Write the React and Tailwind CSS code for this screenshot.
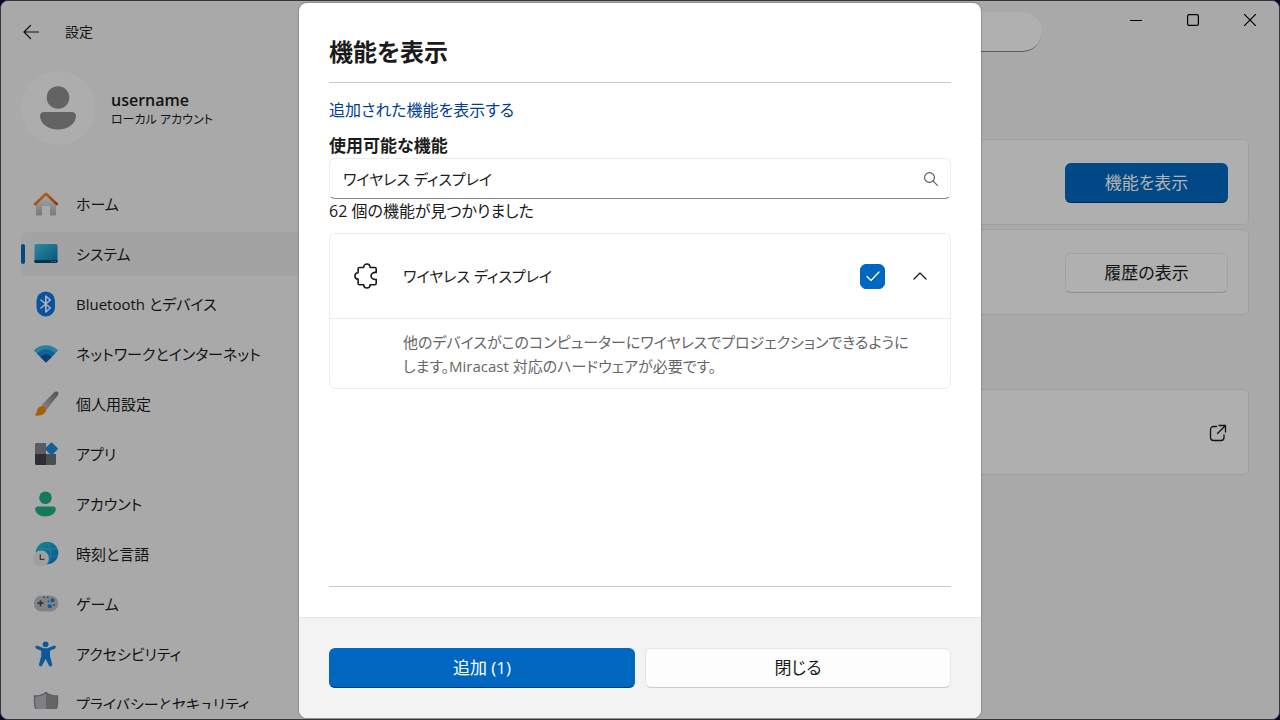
import React, { useState } from 'react';

const HomeIcon = () => (
  <svg viewBox="0 0 26 26" className="size-[26px]">
    <defs>
      <linearGradient id="home-wall" x1="0" y1="0" x2="0" y2="1">
        <stop offset="0" stopColor="#f2f2f2" />
        <stop offset="1" stopColor="#adadad" />
      </linearGradient>
      <linearGradient id="home-roof" x1="0" y1="0" x2="1" y2="1">
        <stop offset="0" stopColor="#ff9a2e" />
        <stop offset="1" stopColor="#d8501c" />
      </linearGradient>
    </defs>
    <path d="M3 11 13 3l10 8v12.200c0 .8-.5 1.300-1.300 1.300H17v-9.500H9v9.500H4.300c-.8 0-1.300-.5-1.300-1.300z" fill="url(#home-wall)" />
    <path d="M2 13.200 13 2.800l11 10.400" fill="none" stroke="url(#home-roof)" strokeWidth="2.600" strokeLinecap="round" strokeLinejoin="round" />
  </svg>
);

const SystemIcon = () => (
  <svg viewBox="0 0 26 26" className="size-[26px]">
    <defs>
      <linearGradient id="sys-screen" x1="0" y1="0" x2="1" y2="1">
        <stop offset="0" stopColor="#3fc8e0" />
        <stop offset="1" stopColor="#0a78b4" />
      </linearGradient>
    </defs>
    <rect x="1.500" y="3" width="23" height="19" rx="1.800" fill="url(#sys-screen)" />
    <path d="M1.500 19h23v1.400a1.600 1.600 0 0 1-1.600 1.600H3.100a1.600 1.600 0 0 1-1.600-1.600z" fill="#0c4668" />
    <path d="M18.500 20.500h1M21.500 20.500h1" stroke="#b5e4f5" />
  </svg>
);

const BluetoothIcon = () => (
  <svg viewBox="0 0 26 26" className="size-[26px]">
    <rect x="3.500" y=".5" width="18.500" height="25" rx="9.200" fill="#0a78e6" />
    <path d="M8 9 17.300 17 12.800 21V5l4.500 4L8 17" fill="none" stroke="#fff" strokeWidth="1.600" strokeLinejoin="round" strokeLinecap="round" />
  </svg>
);

const NetworkIcon = () => (
  <svg viewBox="0 0 26 26" className="size-[26px]">
    <path d="M.8 9.500C7.500 2.500 18.500 2.500 25.200 9.500L13 21.500z" fill="#35bce8" />
    <path d="M3.800 12.500c5-5.300 13.400-5.300 18.400 0L13 21.500z" fill="#1a8ad6" />
    <path d="M7.300 15.900c3.100-3.400 8.300-3.400 11.400 0L13 21.500z" fill="#1155b0" />
  </svg>
);

const BrushIcon = () => (
  <svg viewBox="0 0 26 26" className="size-[26px]">
    <defs>
      <linearGradient id="brush-handle" x1="0" y1="1" x2="1" y2="0">
        <stop offset="0" stopColor="#c0c0c4" />
        <stop offset="1" stopColor="#77777d" />
      </linearGradient>
    </defs>
    <path d="M8.500 14 20.500 2c1.900-1.800 3.800-1.700 4.500-.9.7.9.500 2.400-.7 3.900L13.500 18.800z" fill="url(#brush-handle)" />
    <path d="M8.300 15.200c2.300-1 5.300 1.100 4.700 4.100-.7 4.700-7 6.500-12 4.700 2.800-.7 2.300-2.700 3-4.800.7-2.300 2.300-3.400 4.300-4z" fill="#f28a10" />
  </svg>
);

const AppsIcon = () => (
  <svg viewBox="0 0 26 26" className="size-[26px]">
    <path d="M3.500 2H13v11H2V3.500C2 2.700 2.700 2 3.500 2z" fill="#84848a" />
    <path d="M2 13h11v11H3.500c-.8 0-1.500-.7-1.500-1.500z" fill="#3f4247" />
    <path d="M13 13h10v9.500c0 .8-.7 1.500-1.500 1.500H13z" fill="#6c6f74" />
    <rect x="13.700" y="3" width="9.600" height="9.600" rx="1" transform="rotate(45 18.500 7.800)" fill="#1b8ddb" />
  </svg>
);

const AccountIcon = () => (
  <svg viewBox="0 0 26 26" className="size-[26px]">
    <circle cx="12.500" cy="6.800" r="6.300" fill="#1fae84" />
    <path d="M4.700 15.500h15.600c1.400 0 2.500 1 2.500 2.300 0 4.600-4.500 7.700-10.300 7.700S2.200 22.400 2.200 17.800c0-1.300 1.100-2.300 2.500-2.300z" fill="#1fae84" />
  </svg>
);

const TimeIcon = () => (
  <svg viewBox="0 0 26 26" className="size-[26px]">
    <defs>
      <linearGradient id="globe" x1="0" y1="0" x2="1" y2="1">
        <stop offset="0" stopColor="#23c4c8" />
        <stop offset="1" stopColor="#0a78d4" />
      </linearGradient>
    </defs>
    <circle cx="14" cy="12" r="11.300" fill="url(#globe)" />
    <path d="M4 8h20M14 15h11M14 1c5 6 5 16 0 22" fill="none" stroke="#5cc8e6" strokeWidth=".5" />
    <circle cx="8" cy="17.500" r="8" fill="#e4e4e4" />
    <path d="M7.300 13.300v5h4.200" fill="none" stroke="#555" strokeWidth="1.300" />
  </svg>
);

const GameIcon = () => (
  <svg viewBox="0 0 26 26" className="size-[26px]">
    <rect x=".8" y="4.500" width="24.500" height="16" rx="8" fill="#b9bdc2" />
    <path d="M7.500 9.200v6M4.500 12.200h6" stroke="#4a4d52" strokeWidth="1.700" />
    <path d="M10.500 6.300h1.500M14 6.300h1.500" stroke="#4a4d52" strokeWidth="1.200" />
    <circle cx="19.500" cy="9.300" r="2" fill="#1b7fe0" />
    <circle cx="16.700" cy="15.300" r="2" fill="#1b7fe0" />
    <circle cx="21" cy="14" r="1" fill="#1b7fe0" />
    <circle cx="15.500" cy="10.500" r="1" fill="#1b7fe0" />
  </svg>
);

const AccessibilityIcon = () => (
  <svg viewBox="0 0 26 26" className="size-[26px]">
    <circle cx="12.600" cy="3.300" r="2.900" fill="#1280dc" />
    <path d="M4 6.200 9 8.200M21.200 6.200l-5 2" stroke="#1280dc" strokeWidth="3.200" strokeLinecap="round" />
    <path d="M8.200 7.200h8.800v8l2.200 8.100a1.700 1.700 0 0 1-3.200 1.100L12.600 18l-3.400 6.400A1.700 1.700 0 0 1 6 23.300l2.200-8.100z" fill="#1280dc" />
  </svg>
);

const ShieldIcon = () => (
  <svg viewBox="0 0 26 26" className="size-[26px]">
    <path d="M13 1.500C10 4 6 5 1.500 5v7c0 6.500 4 11 11.500 14z" fill="#b4b7bb" />
    <path d="M13 1.500C16 4 20 5 24.500 5v7c0 6.500-4 11-11.500 14z" fill="#8f9297" />
    <path d="M13 1.500C10 4 6 5 1.500 5v7c0 6.500 4 11 11.500 14 7.500-3 11.500-7.500 11.500-14V5C20 5 16 4 13 1.500z" fill="none" stroke="#85888d" strokeWidth="1.400" />
  </svg>
);

const PuzzleIcon = () => (
  <svg viewBox="0 0 26 26" className="size-[26px]" fill="none" stroke="#1b1b1b" strokeWidth="1.600" strokeLinejoin="round">
    <path d="M5.500 4.500h4.200c0-2 1.300-3.500 3.200-3.500s3.200 1.500 3.200 3.500h4.700c.8 0 1.400.6 1.400 1.400v3.600c-2.700-.4-5.200 1-5.200 3.400s2.500 3.900 5.200 3.500v3.900c0 .8-.6 1.400-1.400 1.400h-4.700c0 2-1.300 3.300-3.200 3.300s-3.200-1.300-3.200-3.300H5.500c-.8 0-1.400-.6-1.400-1.400v-4.200c-2 0-3.100-1.400-3.100-3.200s1.100-3.200 3.100-3.200V5.900c0-.8.6-1.400 1.400-1.400z" />
  </svg>
);

const navItems = [
  { label: 'ホーム', Icon: HomeIcon },
  { label: 'システム', Icon: SystemIcon, active: true },
  { label: 'Bluetooth とデバイス', Icon: BluetoothIcon },
  { label: 'ネットワークとインターネット', Icon: NetworkIcon },
  { label: '個人用設定', Icon: BrushIcon },
  { label: 'アプリ', Icon: AppsIcon },
  { label: 'アカウント', Icon: AccountIcon },
  { label: '時刻と言語', Icon: TimeIcon },
  { label: 'ゲーム', Icon: GameIcon },
  { label: 'アクセシビリティ', Icon: AccessibilityIcon },
  { label: 'プライバシーとセキュリティ', Icon: ShieldIcon },
];

const Sidebar = () => (
  <aside className="flex w-80 shrink-0 flex-col pl-5">
    <div className="flex h-[62px] shrink-0 items-center gap-6">
      <button type="button" aria-label="戻る">
        <svg viewBox="0 0 20 20" className="size-5" fill="none" stroke="#1b1b1b" strokeWidth="1.200" strokeLinecap="round" strokeLinejoin="round">
          <path d="M17.500 10H3M9.500 3.500 3 10l6.500 6.500" />
        </svg>
      </button>
      <span className="text-sm">設定</span>
    </div>

    <div className="mt-2 flex shrink-0 items-center gap-4">
      <div className="flex size-[74px] items-center justify-center rounded-full bg-[#f8f8f8]">
        <svg viewBox="0 0 36 44" className="h-11 w-9" fill="#8e8e8e">
          <circle cx="18" cy="11.500" r="11.300" />
          <path d="M4 26h28c2.200 0 4 1.500 4 3.600C36 38 28 43.500 18 43.500S0 38 0 29.600C0 27.500 1.800 26 4 26z" />
        </svg>
      </div>
      <div className="pt-1">
        <p className="text-base leading-5 font-semibold">username</p>
        <p className="text-xs leading-5">ローカル アカウント</p>
      </div>
    </div>

    <nav className="mt-[37px] mb-[10px] flex min-h-0 flex-1 flex-col gap-[6px] overflow-hidden">
      {navItems.map(({ label, Icon, active }) => (
        <a
          key={label}
          href="#"
          className={`flex h-11 shrink-0 items-center rounded-md ${active ? 'bg-[#eaeaea]' : ''}`}
        >
          <span className={`mr-2 h-5 w-1 rounded-full ${active ? 'bg-[#0067c0]' : ''}`}></span>
          <Icon />
          <span className="ml-[17px] text-[15px] whitespace-nowrap">{label}</span>
        </a>
      ))}
    </nav>
  </aside>
);

const Card = ({ children }) => (
  <div className="flex h-[86px] items-center justify-end rounded-md border border-[#e5e5e5] bg-[#fbfbfb] px-5 pt-[2px]">
    {children}
  </div>
);

const MainArea = () => (
  <main className="flex min-w-0 flex-1 flex-col">
    <div className="flex justify-between pr-px">
      <div className="mt-[11px] w-[721px] overflow-hidden rounded-full">
        <input
          type="search"
          aria-label="設定の検索"
          className="block h-10 w-full rounded-full border-b border-[#868686] bg-[#fdfdfd] px-5 focus:outline-none"
        />
      </div>
      <div className="flex h-[38px]">
        <button type="button" aria-label="最小化" className="flex w-[57px] items-center justify-center">
          <svg viewBox="0 0 12 12" className="size-3" stroke="#000" strokeWidth="1.200">
            <path d="M0 6.500h12" />
          </svg>
        </button>
        <button type="button" aria-label="最大化" className="flex w-[57px] items-center justify-center">
          <svg viewBox="0 0 12 12" className="size-3" fill="none" stroke="#000" strokeWidth="1.200">
            <rect x=".6" y=".6" width="10.800" height="10.800" rx="1.500" />
          </svg>
        </button>
        <button type="button" aria-label="ウィンドウを閉じる" className="flex w-[57px] items-center justify-center">
          <svg viewBox="0 0 12 12" className="size-3" stroke="#000" strokeWidth="1.200">
            <path d="m0 0 12 12M12 0 0 12" />
          </svg>
        </button>
      </div>
    </div>

    <div className="mt-[87px] mr-[30px] flex flex-col gap-1">
      <Card>
        <button type="button" className="h-10 w-[163px] rounded-md border-b border-[#003e73] bg-[#0067c0] text-[17px] text-white">
          機能を表示
        </button>
      </Card>
      <Card>
        <button type="button" className="h-10 w-[163px] rounded-md border border-[#e9e9e9] border-b-[#cfcfcf] bg-[#fdfdfd] text-[17px]">
          履歴の表示
        </button>
      </Card>
    </div>

    <div className="mt-[74px] mr-[30px]">
      <Card>
        <a href="#" aria-label="開く" className="block">
          <svg viewBox="0 0 20 20" className="size-5" fill="none" stroke="#1b1b1b" strokeWidth="1.300" strokeLinecap="round" strokeLinejoin="round">
            <path d="M8.500 3.500H5.500A3 3 0 0 0 2.500 6.500v8a3 3 0 0 0 3 3H13a3 3 0 0 0 3-3V12M11 2.500h6.500V9M17.500 2.500 9.500 10.500" />
          </svg>
        </a>
      </Card>
    </div>
  </main>
);

const FeatureDialog = () => {
  const [query, setQuery] = useState('ワイヤレス ディスプレイ');
  const [checked, setChecked] = useState(true);
  const [expanded, setExpanded] = useState(true);

  return (
    <div
      role="dialog"
      aria-labelledby="dialog-title"
      className="flex w-full max-w-[682px] flex-col overflow-hidden rounded-lg bg-white shadow-[0_0_2px_rgba(0,0,0,0.5)]"
    >
      <div className="flex min-h-0 flex-1 flex-col px-[30px] pt-[31px] pb-[30px]">
        <h1 id="dialog-title" className="text-2xl leading-9 font-bold">機能を表示</h1>

        <div className="mt-3 flex-1 border-y border-[#c8c8c8] pt-[15px]">
          <a href="#" className="block text-base leading-6 text-[#003e92]">追加された機能を表示する</a>

          <label htmlFor="feature-search" className="mt-3 block text-[17px] leading-6 font-bold">使用可能な機能</label>
          <div className="flex h-[41px] items-center rounded-md border border-[#ececec] border-b-[#868686] pr-3 pl-[13px]">
            <input
              id="feature-search"
              type="text"
              value={query}
              onChange={(e) => setQuery(e.target.value)}
              className="min-w-0 flex-1 text-[15px] leading-6 focus:outline-none"
            />
            <svg viewBox="0 0 14 14" className="size-[14px]" fill="none" stroke="#555" strokeWidth="1.100" strokeLinecap="round">
              <circle cx="5.500" cy="5.500" r="4.900" />
              <path d="m9.200 9.200 4.200 4.200" />
            </svg>
          </div>
          <p className="text-base leading-6">62 個の機能が見つかりました</p>

          <div className="mt-[10px] rounded-md border border-[#ececec]">
            <div className="flex h-[84px] items-center pr-[23px] pl-6">
              <PuzzleIcon />
              <label htmlFor="feature-wireless" className="ml-[23px] flex-1 text-[15px]">ワイヤレス ディスプレイ</label>
              <span className="grid place-items-center">
                <input
                  id="feature-wireless"
                  type="checkbox"
                  checked={checked}
                  onChange={(e) => setChecked(e.target.checked)}
                  className="col-start-1 row-start-1 size-[25px] appearance-none rounded-md border border-[#868686] checked:border-[#0067c0] checked:bg-[#0067c0]"
                />
                {checked && (
                  <svg viewBox="0 0 14 12" className="pointer-events-none col-start-1 row-start-1 h-3 w-[14px]" fill="none" stroke="#fff" strokeWidth="1.300" strokeLinecap="round" strokeLinejoin="round">
                    <path d="m1 6.500 4 4 8-8.500" />
                  </svg>
                )}
              </span>
              <button
                type="button"
                aria-label="詳細"
                aria-expanded={expanded}
                onClick={() => setExpanded(!expanded)}
                className="ml-7"
              >
                <svg viewBox="0 0 14 8" className="h-2 w-[14px]" fill="none" stroke="#1b1b1b" strokeWidth="1.300" strokeLinecap="round" strokeLinejoin="round">
                  <path d="m1 7 6-6 6 6" />
                </svg>
              </button>
            </div>
            {expanded && (
              <p className="border-t border-[#ececec] pt-[11px] pr-8 pb-[10px] pl-[73px] text-[15px] leading-6 text-[#666]">
                他のデバイスがこのコンピューターにワイヤレスでプロジェクションできるように
                <br />
                します。Miracast 対応のハードウェアが必要です。
              </p>
            )}
          </div>
        </div>
      </div>

      <div className="grid grid-cols-2 gap-[10px] border-t border-[#e5e5e5] bg-[#f3f3f3] px-[30px] py-[30px] text-[17px]">
        <button type="button" className="h-10 rounded-md border-b border-[#003e73] bg-[#0067c0] text-white">追加 (1)</button>
        <button type="button" className="h-10 rounded-md border border-[#e5e5e5] border-b-[#cccccc] bg-[#fdfdfd]">閉じる</button>
      </div>
    </div>
  );
};

const App = () => (
  <div className="flex h-screen bg-[#08082e] font-['Open_Sans','Noto_Sans_CJK_JP',sans-serif] text-[#1b1b1b] [font-feature-settings:'palt']">
    <div className="relative flex w-full overflow-hidden rounded-lg border border-[#36343c] bg-[#f3f3f3]">
      <Sidebar />
      <MainArea />
      <div className="absolute inset-0 flex justify-center bg-black/30 pt-[2px] pb-px">
        <FeatureDialog />
      </div>
    </div>
  </div>
);

export default App;
